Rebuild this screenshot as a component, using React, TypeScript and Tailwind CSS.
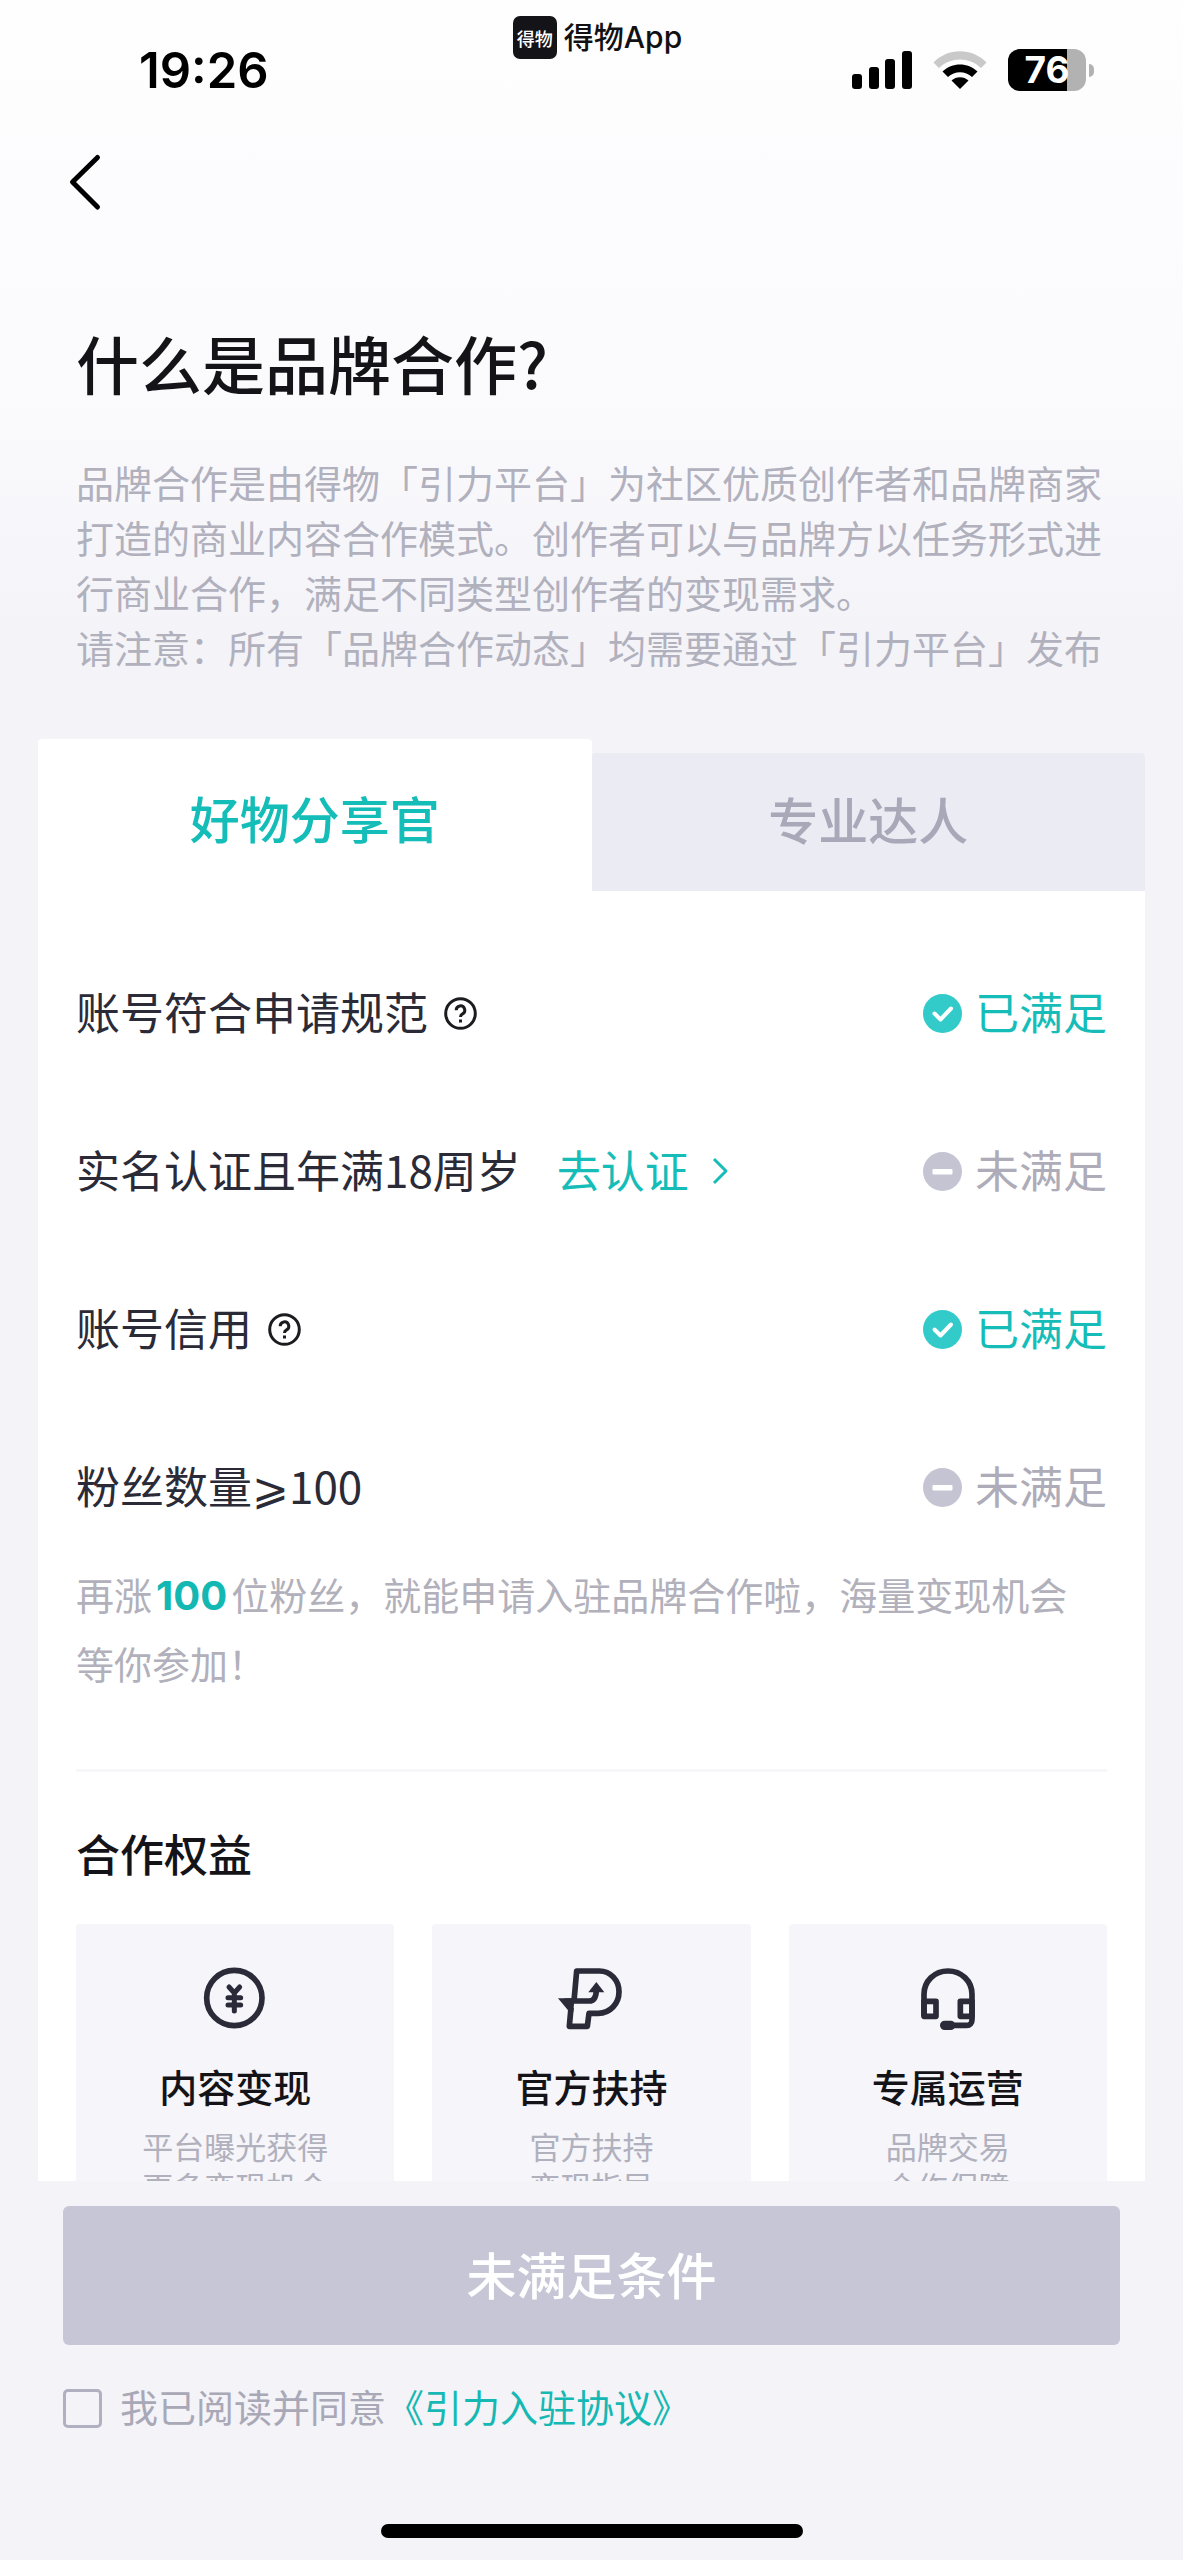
import { useState } from "react";
import type { ReactNode } from "react";

function SignalIcon() {
  return (
    <svg width="60" height="38" viewBox="0 0 60 38" aria-hidden="true">
      <rect x="0" y="23" width="10" height="15" rx="3" />
      <rect x="17" y="16" width="10" height="22" rx="3" />
      <rect x="33" y="8" width="10" height="30" rx="3" />
      <rect x="50" y="0" width="10" height="38" rx="3" />
    </svg>
  );
}

function WifiIcon() {
  return (
    <svg width="54" height="38" viewBox="0 0 54 38" aria-hidden="true">
      <path d="M0.5 11.5C15 -3.5 39 -3.5 53.5 11.5L48 17C36.500 5.500 17.500 5.500 6 17Z" fill="#c9c9c9" />
      <path d="M9.500 20.500C19 11 35 11 44.500 20.500L39 26C32.500 19.500 21.500 19.500 15 26Z" />
      <path d="M18.500 29.500C23 25 31 25 35.500 29.500L27 38Z" />
    </svg>
  );
}

function Battery({ level }: { level: number }) {
  return (
    <div className="flex items-center gap-[3px]">
      <div className="relative flex h-[42px] w-[78px] items-center justify-center rounded-[12px] bg-[#b2b2b2]">
        <div className="absolute inset-y-0 left-0 rounded-l-[12px] bg-black" style={{ width: `${level}%` }} />
        <span className="relative font-[Inter,sans-serif] text-[37px] leading-[42px] font-bold text-white">{level}</span>
      </div>
      <div className="h-[13px] w-[5px] rounded-r-full bg-[#b2b2b2]" />
    </div>
  );
}

function HelpIcon() {
  return (
    <svg width="33" height="33" viewBox="0 0 33 33" fill="none" stroke="#1c1c20" strokeWidth="3" aria-hidden="true">
      <circle cx="16.500" cy="16.500" r="14.800" />
      <path d="M12.200 13.200a4.300 4.300 0 1 1 6.400 3.700c-1.500.8-2.100 1.500-2.100 3.100" />
      <rect x="15" y="22.500" width="3" height="3" fill="#1c1c20" stroke="none" />
    </svg>
  );
}

function CheckIcon() {
  return (
    <svg width="39" height="39" viewBox="0 0 39 39" fill="none" aria-hidden="true">
      <circle cx="19.500" cy="19.500" r="19.500" fill="#33cbc9" />
      <path d="M11.500 19.500l6 6L28 14.500" stroke="#fff" strokeWidth="4" strokeLinecap="round" strokeLinejoin="round" />
    </svg>
  );
}

function MinusIcon() {
  return (
    <svg width="39" height="39" viewBox="0 0 39 39" aria-hidden="true">
      <circle cx="19.500" cy="19.500" r="19.500" fill="#c5c4d3" />
      <rect x="9.500" y="17" width="20" height="5.500" rx="1" fill="#fff" />
    </svg>
  );
}

function YenIcon() {
  return (
    <svg width="66" height="66" viewBox="37 46 198 198" fill="none" stroke="#2a2a38" aria-hidden="true">
      <circle cx="134" cy="145" r="83" strokeWidth="17" />
      <path d="M118 112l16 18 16-18M134 130v54M115 144h38M115 166h38" strokeWidth="15" strokeLinecap="round" />
    </svg>
  );
}

function PromoteIcon() {
  return (
    <svg width="66" height="66" viewBox="40 46 198 198" fill="none" stroke="#2a2a38" strokeWidth="17" strokeLinejoin="round" aria-hidden="true">
      <path d="M88 154L96 64h68c34 0 59 28 59 62 0 36-27 65-62 65h-28l-5 39H74l5-56" />
      <path d="M60 154h74c14 0 20-10 21-32" />
      <path d="M155 97l24 31h-48z" fill="#2a2a38" stroke="none" />
      <path d="M40 146h48v16l-2 24-14-2z" fill="#2a2a38" stroke="none" />
    </svg>
  );
}

function HeadsetIcon() {
  return (
    <svg width="66" height="66" viewBox="46 46 198 198" fill="none" stroke="#2a2a38" strokeWidth="17" strokeLinejoin="round" aria-hidden="true">
      <path d="M73 200V134c0-40 32-70 72-70s72 30 72 70v76c0 10-6 17-16 17h-50" />
      <path d="M73 155h36v45H73zM217 155h-35v45h35z" />
      <path d="M135 227h18" strokeWidth="28" strokeLinecap="round" />
    </svg>
  );
}

function Requirement({ label, met, children }: { label: string; met: boolean; children?: ReactNode }) {
  return (
    <li className="flex items-center justify-between">
      <div className="flex items-center">
        <span className="pb-1 text-[#2b2b38]">{label}</span>
        {children}
      </div>
      <div className={met ? "flex items-center gap-[13px] text-[#16bdb8]" : "flex items-center gap-[13px] text-[#adacb8]"}>
        {met ? <CheckIcon /> : <MinusIcon />}
        <span className="pb-1">{met ? "已满足" : "未满足"}</span>
      </div>
    </li>
  );
}

function HelpButton({ label }: { label: string }) {
  return (
    <button type="button" aria-label={label} className="ml-4">
      <HelpIcon />
    </button>
  );
}

const benefits = [
  { icon: <YenIcon />, title: "内容变现", lines: ["平台曝光获得", "更多变现机会"] },
  { icon: <PromoteIcon />, title: "官方扶持", lines: ["官方扶持", "变现指导"] },
  { icon: <HeadsetIcon />, title: "专属运营", lines: ["品牌交易", "合作保障"] },
];

export default function App() {
  const [agreed, setAgreed] = useState(false);
  const [tab, setTab] = useState(0);
  const tabs = ["好物分享官", "专业达人"];

  return (
    <div className="flex h-screen flex-col bg-[#f3f3f8] bg-[linear-gradient(to_bottom,#fefefe_0px,#fcfcfe_240px,#fafafd_430px,#f3f3f8_640px)] font-['Noto_Sans_CJK_SC',sans-serif] text-[38px] text-black">
      <header className="grid h-[108px] shrink-0 grid-cols-[1fr_auto_1fr]">
        <time className="pt-[41px] pl-[139px] font-[Inter,sans-serif] text-[49px] leading-[60px] font-semibold">19:26</time>
        <div className="flex items-center gap-[7px] self-start pt-4 pl-3">
          <span className="flex h-[43px] w-11 items-center justify-center rounded-[7px] bg-[#131318] text-[18px] leading-none font-medium text-white">得物</span>
          <span className="font-[Inter,'Noto_Sans_CJK_SC',sans-serif] text-[30px] leading-[43px] font-medium text-[#111114]">得物App</span>
        </div>
        <div className="mt-[49px] flex h-[42px] items-center justify-end gap-[21px] self-start pr-[89px]">
          <SignalIcon />
          <WifiIcon />
          <Battery level={76} />
        </div>
      </header>

      <main className="min-h-0 flex-1 overflow-y-auto [scrollbar-width:none]">
        <nav className="flex h-[148px] items-center pl-[66px]">
          <button type="button" aria-label="返回">
            <svg width="38" height="58" viewBox="0 0 38 58" fill="none" stroke="#000" strokeWidth="5" strokeLinecap="round" strokeLinejoin="round" aria-hidden="true">
              <path d="M31.500 4.500L6.500 29l25 25" />
            </svg>
          </button>
        </nav>

        <section className="px-[76px]">
          <h1 className="mt-16 text-[63px] leading-[84px] font-medium text-[#141418]">什么是品牌合作?</h1>
          <p className="mt-[50px] leading-[55px] text-[#b1b0bd]">
            品牌合作是由得物「引力平台」为社区优质创作者和品牌商家打造的商业内容合作模式。创作者可以与品牌方以任务形式进行商业合作，满足不同类型创作者的变现需求。
            <br />
            请注意：所有「品牌合作动态」均需要通过「引力平台」发布
          </p>
        </section>

        <section className="mx-[38px] mt-[65px]">
          <div role="tablist" className="flex items-end text-[50px] font-medium">
            {tabs.map((name, i) => (
              <button
                key={name}
                type="button"
                role="tab"
                aria-selected={tab === i}
                onClick={() => setTab(i)}
                className={
                  tab === i
                    ? "h-[152px] flex-1 rounded-t-[4px] bg-white pt-1 text-[#14bdb8]"
                    : "h-[138px] flex-1 rounded-t-[4px] bg-[#ebebf4] pb-2 text-[#a9a8b8]"
                }
              >
                {name}
              </button>
            ))}
          </div>

          <div className="bg-white px-[38px] pt-[87px]">
            <ul className="flex flex-col gap-[88px] text-[44px] leading-[66px]">
              <Requirement label="账号符合申请规范" met>
                <HelpButton label="申请规范说明" />
              </Requirement>
              <Requirement label="实名认证且年满18周岁" met={false}>
                <a href="#verify" className="ml-9 flex items-center gap-[22px] text-[#16bdb8]">
                  <span className="pb-1">去认证</span>
                  <svg width="18" height="28" viewBox="0 0 18 28" fill="none" stroke="currentColor" strokeWidth="3" strokeLinejoin="round" aria-hidden="true">
                    <path d="M3 2l12 12L3 26" />
                  </svg>
                </a>
              </Requirement>
              <Requirement label="账号信用" met>
                <HelpButton label="账号信用说明" />
              </Requirement>
              <Requirement label="粉丝数量⩾100" met={false} />
            </ul>

            <p className="mt-[37px] pr-4 leading-[69px] text-[#b1b0bb]">
              再涨<strong className="mx-1 font-[Inter,sans-serif] text-[40px] leading-none font-bold text-[#14b8b3]">100</strong>位粉丝，就能申请入驻品牌合作啦，海量变现机会等你参加！
            </p>

            <hr className="mt-[72px] border-t-[3px] border-[#f7f7f9]" />

            <h2 className="mt-[51px] text-[44px] leading-[60px] font-medium text-[#141418]">合作权益</h2>

            <div className="mt-[41px] grid grid-cols-3 gap-[38px] pb-[76px]">
              {benefits.map((b) => (
                <article key={b.title} className="flex flex-col items-center rounded-[4px] bg-[#f5f5fa] pt-[41px] pb-[38px]">
                  {b.icon}
                  <h3 className="mt-[27px] leading-[56px] font-medium text-[#141418]">{b.title}</h3>
                  <p className="mt-3 text-center text-[31px] leading-[40px] text-[#b1b0bd]">
                    {b.lines[0]}
                    <br />
                    {b.lines[1]}
                  </p>
                </article>
              ))}
            </div>
          </div>
        </section>
      </main>

      <footer className="shrink-0 bg-[#f3f3f8] px-[63px] pt-[25px] pb-[22px]">
        <button type="button" className="h-[139px] w-full rounded-[6px] bg-[#c7c6d6] pb-1 text-[50px] font-medium text-white">
          未满足条件
        </button>
        <div className="mt-[33px] flex items-center leading-[56px] text-[#a9a8b6]">
          <label className="flex items-center gap-[18px]">
            <input
              type="checkbox"
              checked={agreed}
              onChange={(e) => setAgreed(e.target.checked)}
              className="size-[39px] appearance-none rounded-[5px] border-[3px] border-[#b1b0c0] checked:bg-[#33cbc9]"
            />
            <span className="pb-1">我已阅读并同意</span>
          </label>
          <a href="#agreement" className="pb-1 text-[#16b8b3]">《引力入驻协议》</a>
        </div>
        <div className="mx-auto mt-[86px] h-[14px] w-[422px] rounded-full bg-black" />
      </footer>
    </div>
  );
}
